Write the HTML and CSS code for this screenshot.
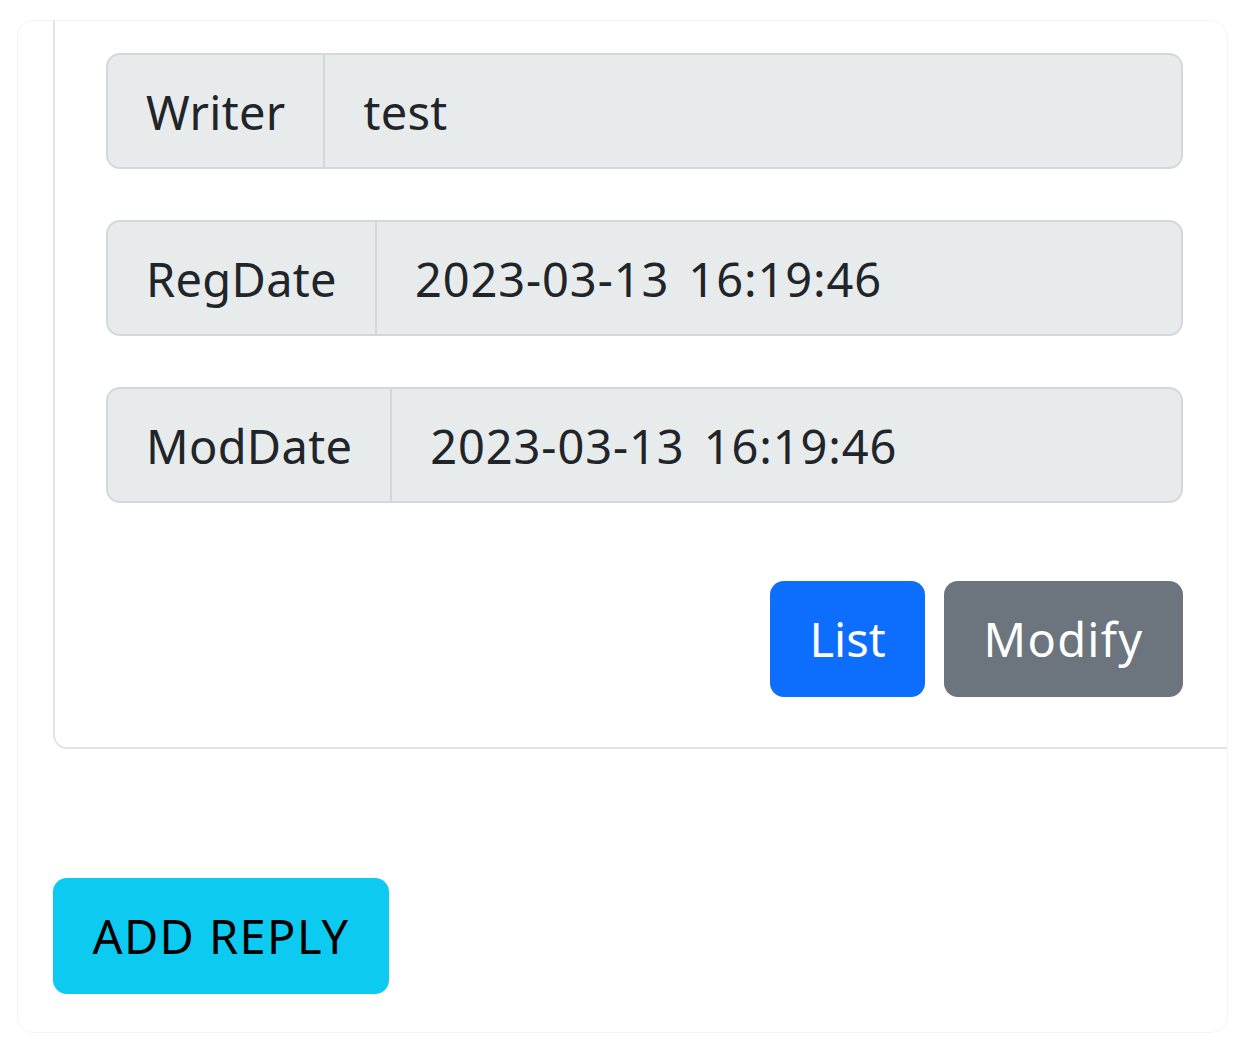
FILE: index.html
```html
<!DOCTYPE html>
<html lang="en">
<head>
<meta charset="utf-8">
<title>Board Read</title>
<link rel="stylesheet" href="styles.css">
</head>
<body>
<div class="outer-card">
  <div class="inner-card">
    <div class="input-group">
      <span class="label">Writer</span>
      <span class="value">test</span>
    </div>
    <div class="input-group">
      <span class="label">RegDate</span>
      <span class="value date">2023-03-13 16:19:46</span>
    </div>
    <div class="input-group">
      <span class="label">ModDate</span>
      <span class="value date">2023-03-13 16:19:46</span>
    </div>
    <div class="actions">
      <button class="btn btn-primary">List</button>
      <button class="btn btn-secondary">Modify</button>
    </div>
  </div>
  <div class="reply-area">
    <button class="btn btn-info">ADD REPLY</button>
  </div>
</div>
</body>
</html>
```

FILE: styles.css
```css
html, body {
  margin: 0;
  padding: 0;
  background: #ffffff;
}

body {
  font-family: "Noto Sans", "Open Sans", "DejaVu Sans", sans-serif;
  color: #212529;
}

.outer-card {
  box-sizing: border-box;
  margin: 20px 21px 0 17px;
  height: 1013px;
  border: 1px solid #f5f5f5;
  border-radius: 16px;
  padding: 0 0 0 35px;
}

.inner-card {
  margin-top: -1px;
  border-left: 2px solid #e4e4e4;
  border-bottom: 2px solid #e4e4e4;
  border-bottom-left-radius: 14px;
  padding: 33px 44px 50px 51px;
  display: flex;
  flex-direction: column;
  gap: 51px;
}

.input-group {
  display: flex;
  height: 116px;
  box-sizing: border-box;
  border: 2px solid #d3d8dc;
  border-radius: 14px;
  background: #e7ebec;
  font-size: 47px;
  line-height: 1;
}

.label,
.value {
  display: flex;
  align-items: center;
  padding: 2px 38px 0;
}

.label {
  border-right: 2px solid #d3d8dc;
  letter-spacing: 0.3px;
}

.label + .value {
  padding-left: 38px;
  letter-spacing: 0.3px;
}

.label + .date {
  letter-spacing: 0.9px;
  word-spacing: 6px;
}

.actions {
  display: flex;
  justify-content: flex-end;
  gap: 19px;
  margin-top: 27px;
}

.btn {
  height: 116px;
  border: none;
  border-radius: 14px;
  font-family: inherit;
  font-size: 47px;
  line-height: 1;
  padding: 0;
  cursor: pointer;
}

.btn-primary {
  background: #0d6efd;
  color: #ffffff;
  width: 155px;
}

.btn-secondary {
  background: #6c757d;
  color: #ffffff;
  width: 239px;
  letter-spacing: 1.3px;
}

.reply-area {
  margin-top: 129px;
}

.btn-info {
  background: #0dcaf0;
  color: #000000;
  width: 336px;
  letter-spacing: 1.4px;
}
```
